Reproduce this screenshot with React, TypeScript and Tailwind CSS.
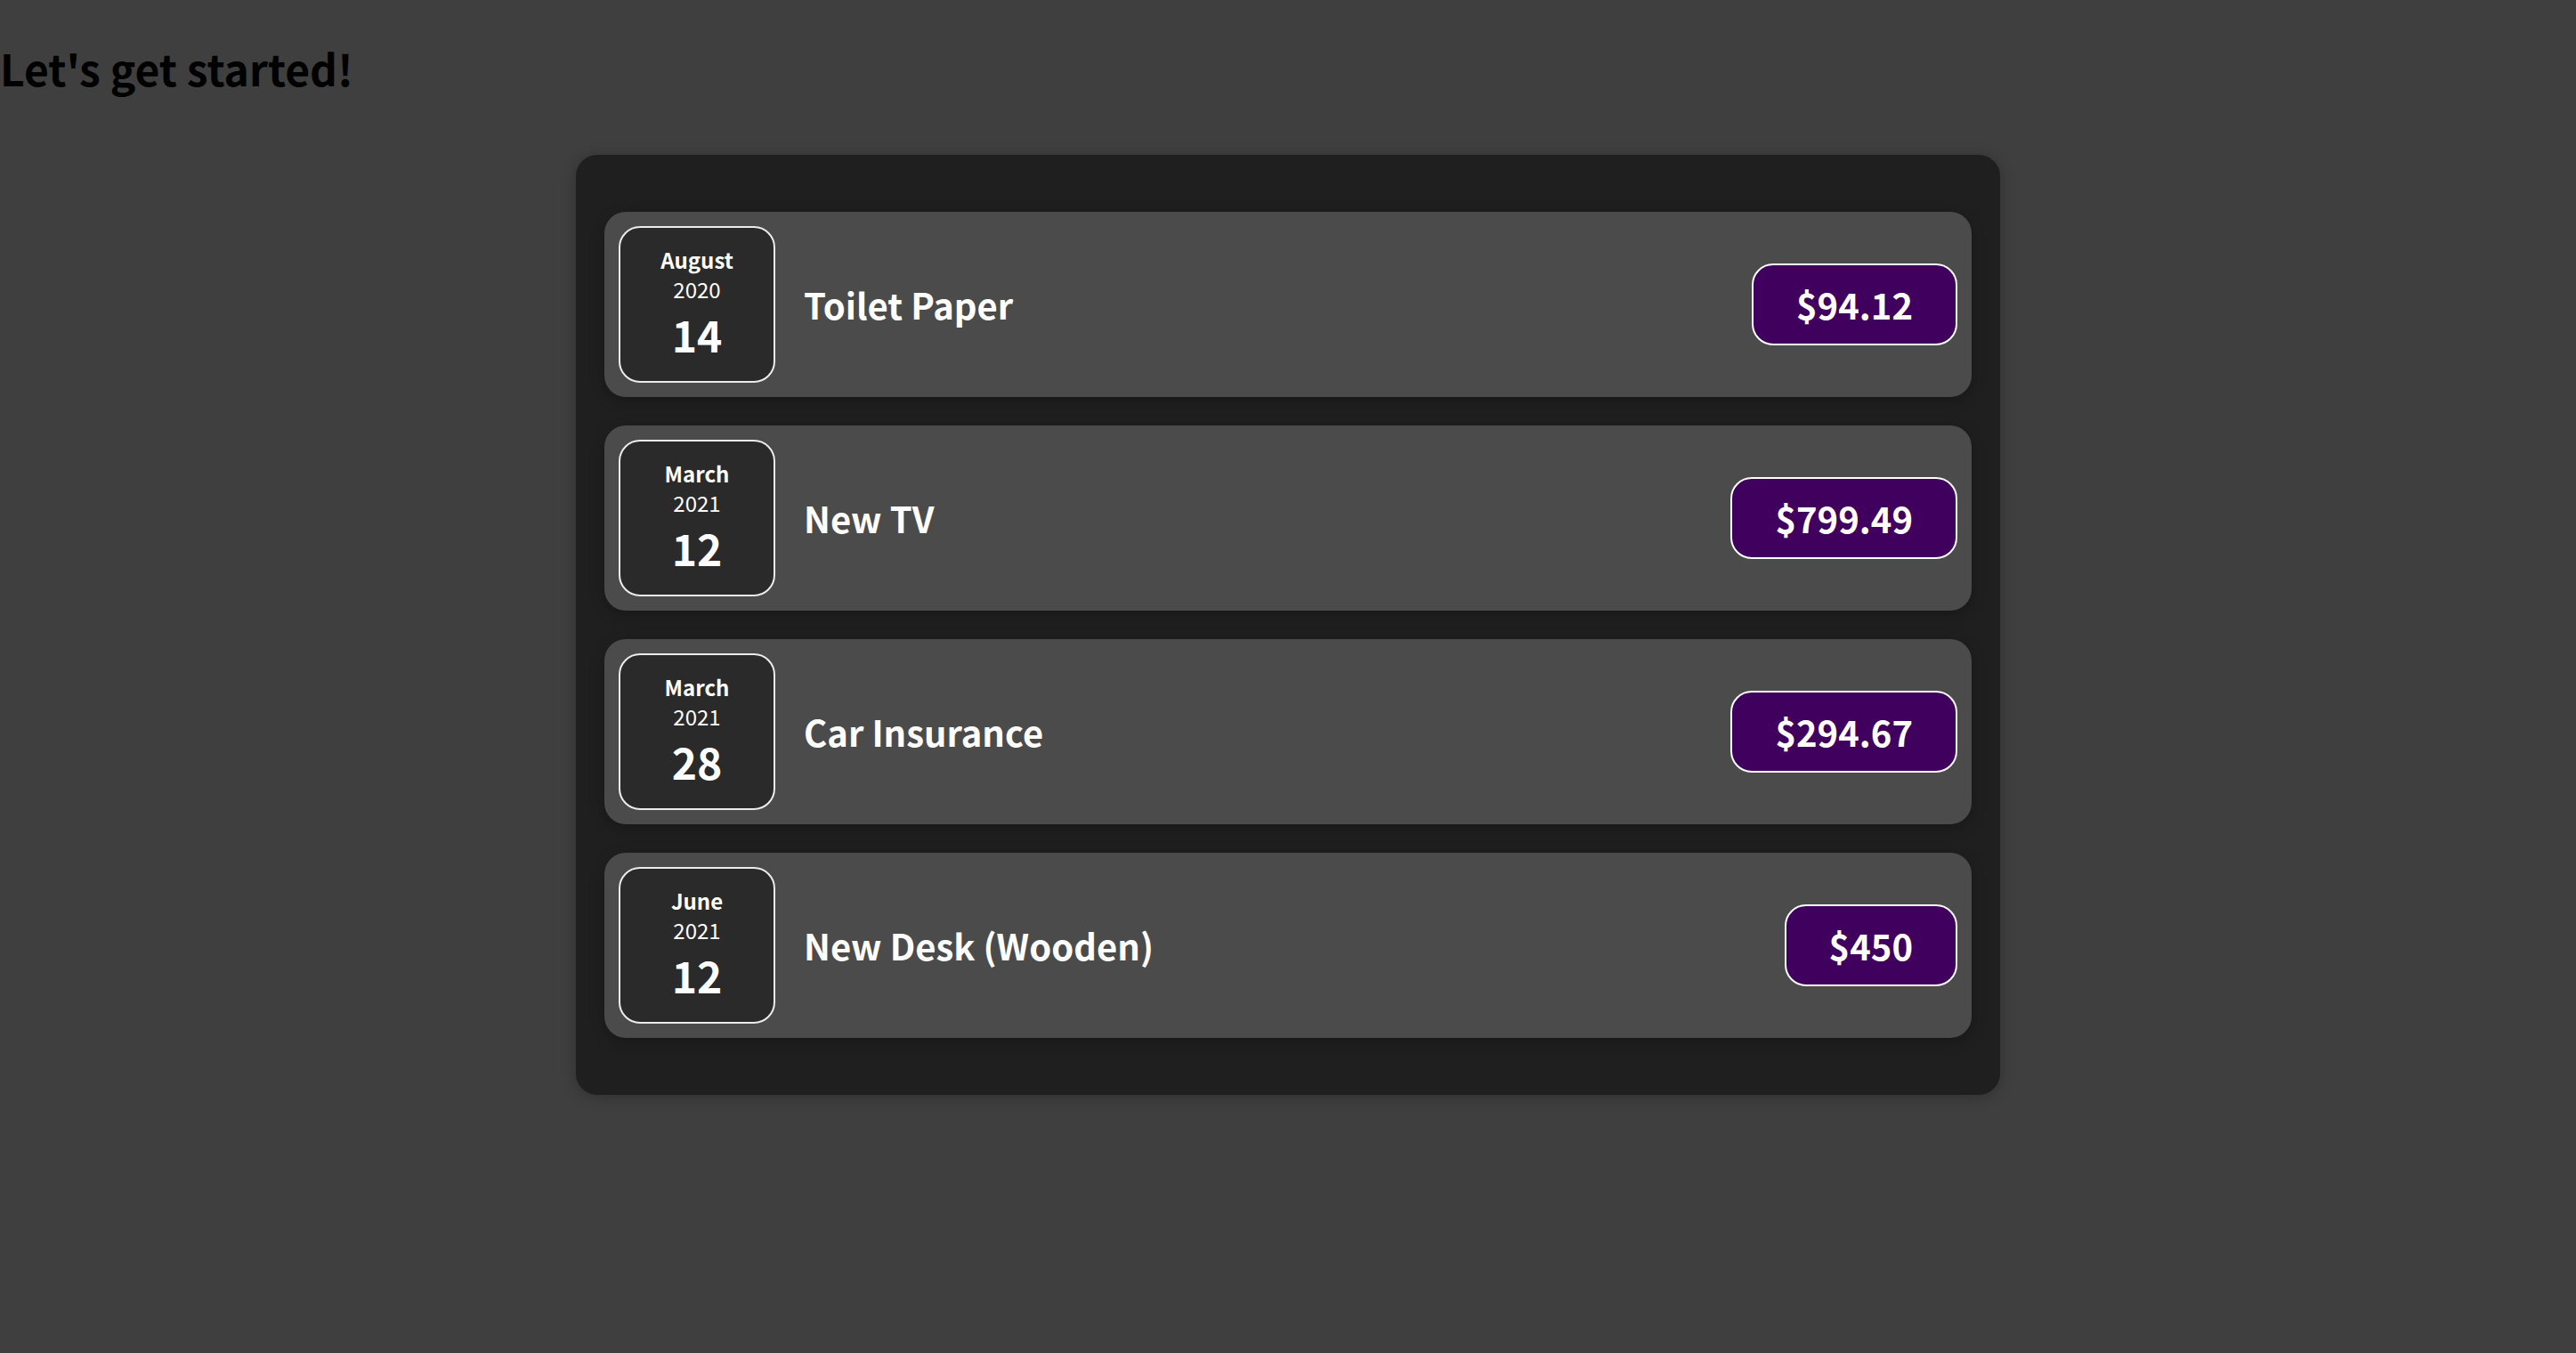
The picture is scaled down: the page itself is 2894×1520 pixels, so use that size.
const expenses = [
  { id: "e1", month: "August", year: "2020", day: "14", title: "Toilet Paper", amount: "$94.12" },
  { id: "e2", month: "March", year: "2021", day: "12", title: "New TV", amount: "$799.49" },
  { id: "e3", month: "March", year: "2021", day: "28", title: "Car Insurance", amount: "$294.67" },
  { id: "e4", month: "June", year: "2021", day: "12", title: "New Desk (Wooden)", amount: "$450" },
];

type Expense = (typeof expenses)[number];

const ExpenseDate = ({ month, year, day }: { month: string; year: string; day: string }) => {
  return (
    <div className="flex flex-col items-center justify-center w-[176px] h-[176px] shrink-0 border-2 border-[#ececec] bg-[#2a2a2a] text-white rounded-[24px] leading-[1.4]">
      <div className="text-[24px] font-bold">{month}</div>
      <div className="text-[24px]">{year}</div>
      <div className="text-[48px] font-bold">{day}</div>
    </div>
  );
};

const ExpenseItem = ({ expense }: { expense: Expense }) => {
  return (
    <div className="flex items-center justify-between p-[16px] rounded-[24px] bg-[#4b4b4b] shadow-[0_4px_16px_rgba(0,0,0,0.25)]">
      <div className="flex flex-1 items-center">
        <ExpenseDate month={expense.month} year={expense.year} day={expense.day} />
        <h2 className="flex-1 mx-[32px] text-[40px] leading-[1.4] font-bold text-white">{expense.title}</h2>
      </div>
      <div className="text-[40px] leading-[1.4] font-bold text-white bg-[#40005d] border-2 border-white px-[48px] py-[16px] rounded-[24px]">
        {expense.amount}
      </div>
    </div>
  );
};

const App = () => {
  return (
    <div className="flex flex-col min-h-screen bg-[#3f3f3f] font-['Noto_Sans_CJK_JP',sans-serif]">
      <h2 className="mt-[40px] text-[48px] font-bold text-black">Let's get started!</h2>
      <div className="w-[1600px] mx-auto mt-[62px] mb-[64px] p-[32px] rounded-[24px] bg-[#1f1f1f] shadow-[0_2px_16px_rgba(0,0,0,0.25)]">
        <div className="flex flex-col gap-[32px] py-[32px]">
          {expenses.map((expense) => (
            <ExpenseItem key={expense.id} expense={expense} />
          ))}
        </div>
      </div>
    </div>
  );
};

export default App;
